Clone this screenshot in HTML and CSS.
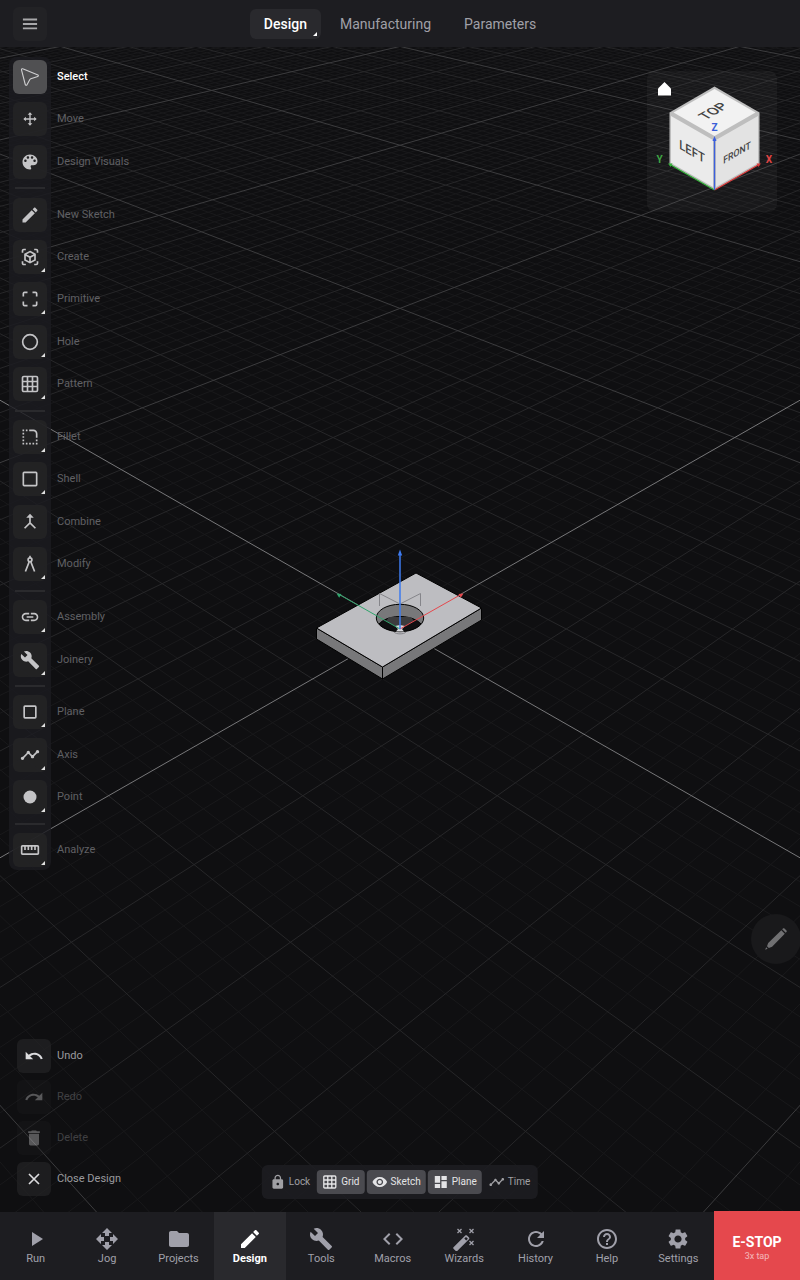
FILE: index.html
```html
<!DOCTYPE html>
<html lang="en">
<head>
    <meta charset="UTF-8">
    <meta name="viewport" content="width=device-width, initial-scale=1.0">
    <title>Design</title>
    <link rel="stylesheet" href="styles.css">
</head>
<body>
    <!-- icon set -->
    <svg class="icon-defs" aria-hidden="true">
        <symbol id="i-menu" viewBox="0 0 24 24"><path d="M3.5 5.5h17v2.3h-17zM3.500 10.800h17v2.300h-17zM3.500 16.100h17v2.300h-17z"/></symbol>
        <symbol id="i-select" viewBox="0 0 24 24"><path class="line thin" d="M3.3 2.2c-.9-.4-1.700.3-1.500 1.200l4.500 17.600c.3 1.100 1.600 1.300 2.100.3l3.400-6.200c.3-.5.7-.9 1.200-1.100l8.300-2.700c.9-.3 1-1.400.2-1.800z"/></symbol>
        <symbol id="i-move" viewBox="0 0 24 24"><path class="line" d="M12 4v16M4 12h16"/><path d="M12 2l3.500 3.800h-7zM12 22l3.500-3.800h-7zM2 12l3.800-3.500v7zM22 12l-3.800-3.500v7z"/></symbol>
        <symbol id="i-palette" viewBox="0 0 24 24"><path d="M12 3c-4.970 0-9 4.030-9 9s4.030 9 9 9c.83 0 1.500-.67 1.500-1.500 0-.39-.15-.74-.39-1.010-.23-.26-.38-.61-.38-.99 0-.83.67-1.500 1.500-1.500H16c2.760 0 5-2.240 5-5 0-4.420-4.030-8-9-8zm-5.500 9c-.83 0-1.500-.67-1.500-1.500S5.670 9 6.500 9 8 9.670 8 10.500 7.330 12 6.500 12zm3-4C8.670 8 8 7.330 8 6.500S8.670 5 9.500 5s1.500.67 1.500 1.500S10.330 8 9.500 8zm5 0c-.83 0-1.500-.67-1.500-1.500S13.670 5 14.500 5s1.500.67 1.500 1.500S15.330 8 14.500 8zm3 4c-.83 0-1.500-.67-1.500-1.500S16.670 9 17.500 9s1.500.67 1.500 1.500-.67 1.500-1.500 1.500z"/></symbol>
        <symbol id="i-edit" viewBox="0 0 24 24"><path d="M3 17.250V21h3.750L17.810 9.940l-3.750-3.750L3 17.250zM20.710 7.040c.39-.39.39-1.020 0-1.410l-2.340-2.340c-.39-.39-1.020-.39-1.410 0l-1.830 1.830 3.750 3.750 1.830-1.830z"/></symbol>
        <symbol id="i-create" viewBox="0 0 24 24"><path class="line" d="M3 7V4.500C3 3.700 3.700 3 4.500 3H7M17 3h2.500c.8 0 1.500.7 1.500 1.500V7M21 17v2.500c0 .8-.7 1.500-1.500 1.500H17M7 21H4.500c-.8 0-1.500-.7-1.500-1.500V17M12 5.500l6 3.300v6.700l-6 3.300-6-3.300V8.800zM6 9l6 3.300L18 9M12 12.300v6"/></symbol>
        <symbol id="i-primitive" viewBox="0 0 24 24"><path class="line" d="M4 9V5.500C4 4.700 4.700 4 5.500 4H9M15 4h3.500c.8 0 1.500.7 1.500 1.500V9M20 15v3.500c0 .8-.7 1.500-1.500 1.500H15M9 20H5.500c-.8 0-1.500-.7-1.500-1.500V15"/></symbol>
        <symbol id="i-hole" viewBox="0 0 24 24"><circle class="line" cx="12" cy="12" r="8.800"/></symbol>
        <symbol id="i-grid" viewBox="0 0 24 24"><path class="line" d="M4.500 3h15c.8 0 1.500.7 1.500 1.500v15c0 .8-.7 1.500-1.500 1.500h-15c-.8 0-1.500-.7-1.500-1.500v-15C3 3.700 3.700 3 4.500 3zM9 3v18M15 3v18M3 9h18M3 15h18"/></symbol>
        <symbol id="i-fillet" viewBox="0 0 24 24"><path d="M3 3h2v2H3zM3 7h2v2H3zM3 11h2v2H3zM3 15h2v2H3zM3 19h2v2H3zM7 19h2v2H7zM11 19h2v2h-2zM15 19h2v2h-2zM19 19h2v2h-2zM19 15h2v2h-2zM7 3h2v2H7zM11 3h5c2.800 0 5 2.200 5 5v5h-2V8c0-1.700-1.300-3-3-3h-5z"/></symbol>
        <symbol id="i-shell" viewBox="0 0 24 24"><rect class="line" x="4" y="4" width="16" height="16" rx="1"/></symbol>
        <symbol id="i-combine" viewBox="0 0 24 24"><path class="line" d="M12 5v8l-6.500 6.500M12 13l6.500 6.500"/><path d="M12 2l4.500 5h-9z"/></symbol>
        <symbol id="i-modify" viewBox="0 0 24 24"><circle class="line" cx="12" cy="7" r="2.300"/><path class="line" d="M12 2v2.500M11 9.500L6.500 21M13 9.500L17.500 21"/></symbol>
        <symbol id="i-link" viewBox="0 0 24 24"><path d="M3.900 12c0-1.710 1.390-3.100 3.100-3.100h4V7H7c-2.760 0-5 2.240-5 5s2.240 5 5 5h4v-1.900H7c-1.710 0-3.100-1.390-3.100-3.100zM8 13h8v-2H8v2zm9-6h-4v1.900h4c1.710 0 3.100 1.390 3.100 3.100s-1.390 3.100-3.100 3.100h-4V17h4c2.760 0 5-2.240 5-5s-2.240-5-5-5z"/></symbol>
        <symbol id="i-wrench" viewBox="0 0 24 24"><path d="M22.700 19l-9.100-9.100c.9-2.300.4-5-1.500-6.900-2-2-5-2.400-7.400-1.300L9 6 6 9 1.600 4.700C.4 7.100.9 10.100 2.900 12.100c1.900 1.900 4.600 2.400 6.900 1.500l9.100 9.100c.4.4 1 .4 1.400 0l2.300-2.300c.5-.4.5-1.100.1-1.400z"/></symbol>
        <symbol id="i-plane" viewBox="0 0 24 24"><rect class="line" x="5" y="5" width="14" height="14" rx="1"/></symbol>
        <symbol id="i-axis" viewBox="0 0 24 24"><path d="M23 8c0 1.100-.9 2-2 2-.18 0-.35-.02-.51-.07l-3.560 3.550c.05.16.07.34.07.52 0 1.100-.9 2-2 2s-2-.9-2-2c0-.18.02-.36.07-.52l-2.550-2.550c-.16.05-.34.07-.52.07s-.36-.02-.52-.07l-4.550 4.560c.05.16.07.33.07.51 0 1.100-.9 2-2 2s-2-.9-2-2 .9-2 2-2c.18 0 .35.02.51.07l4.560-4.550C8.020 9.360 8 9.180 8 9c0-1.100.9-2 2-2s2 .9 2 2c0 .18-.02.36-.07.52l2.550 2.550c.16-.05.34-.07.52-.07s.36.02.52.07l3.550-3.560C19.020 8.350 19 8.180 19 8c0-1.100.9-2 2-2s2 .9 2 2z"/></symbol>
        <symbol id="i-point" viewBox="0 0 24 24"><circle cx="12" cy="12" r="7.800"/></symbol>
        <symbol id="i-ruler" viewBox="0 0 24 24"><path d="M21 6H3c-1.100 0-2 .9-2 2v8c0 1.100.9 2 2 2h18c1.100 0 2-.9 2-2V8c0-1.100-.9-2-2-2zm0 10H3V8h2v4h2V8h2v4h2V8h2v4h2V8h2v4h2V8h2v8z"/></symbol>
        <symbol id="i-undo" viewBox="0 0 24 24"><path d="M12.500 8c-2.650 0-5.050.99-6.900 2.600L2 7v9h9l-3.620-3.620c1.390-1.160 3.160-1.880 5.120-1.880 3.540 0 6.550 2.310 7.600 5.500l2.370-.78C21.080 11.030 17.150 8 12.500 8z"/></symbol>
        <symbol id="i-redo" viewBox="0 0 24 24"><path d="M18.400 10.600C16.550 8.990 14.150 8 11.500 8c-4.650 0-8.580 3.030-9.960 7.220L3.900 16c1.050-3.190 4.050-5.500 7.600-5.500 1.950 0 3.730.72 5.120 1.880L13 16h9V7l-3.600 3.600z"/></symbol>
        <symbol id="i-delete" viewBox="0 0 24 24"><path d="M6 19c0 1.100.9 2 2 2h8c1.100 0 2-.9 2-2V7H6v12zM19 4h-3.500l-1-1h-5l-1 1H5v2h14V4z"/></symbol>
        <symbol id="i-close" viewBox="0 0 24 24"><path class="line" d="M6 6l12 12M18 6L6 18"/></symbol>
        <symbol id="i-lock" viewBox="0 0 24 24"><path d="M18 8h-1V6c0-2.760-2.240-5-5-5S7 3.240 7 6v2H6c-1.100 0-2 .9-2 2v10c0 1.100.9 2 2 2h12c1.100 0 2-.9 2-2V10c0-1.100-.9-2-2-2zm-6 9c-1.100 0-2-.9-2-2s.9-2 2-2 2 .9 2 2-.9 2-2 2zm3.100-9H8.900V6c0-1.710 1.390-3.100 3.100-3.100 1.710 0 3.100 1.390 3.100 3.100v2z"/></symbol>
        <symbol id="i-eye" viewBox="0 0 24 24"><path d="M12 4.500C7 4.500 2.730 7.610 1 12c1.730 4.390 6 7.500 11 7.500s9.270-3.110 11-7.500c-1.730-4.390-6-7.500-11-7.500zM12 17c-2.760 0-5-2.240-5-5s2.240-5 5-5 5 2.240 5 5-2.240 5-5 5zm0-8c-1.660 0-3 1.340-3 3s1.340 3 3 3 3-1.340 3-3-1.340-3-3-3z"/></symbol>
        <symbol id="i-dash" viewBox="0 0 24 24"><path d="M3 13h8V3H3v10zm0 8h8v-6H3v6zm10 0h8V11h-8v10zm0-18v6h8V3h-8z"/></symbol>
        <symbol id="i-play" viewBox="0 0 24 24"><path d="M8 5v14l11-7z"/></symbol>
        <symbol id="i-jog" viewBox="0 0 24 24"><path d="M10 9h4V6h3l-5-5-5 5h3v3zm-1 1H6V7l-5 5 5 5v-3h3v-4zm14 2l-5-5v3h-3v4h3v3l5-5zm-9 3h-4v3H7l5 5 5-5h-3v-3z"/></symbol>
        <symbol id="i-folder" viewBox="0 0 24 24"><path d="M10 4H4c-1.100 0-1.990.9-1.990 2L2 18c0 1.100.9 2 2 2h16c1.100 0 2-.9 2-2V8c0-1.100-.9-2-2-2h-8l-2-2z"/></symbol>
        <symbol id="i-code" viewBox="0 0 24 24"><path d="M9.400 16.600L4.800 12l4.600-4.600L8 6l-6 6 6 6 1.400-1.400zm5.200 0l4.600-4.600-4.600-4.600L16 6l6 6-6 6-1.400-1.400z"/></symbol>
        <symbol id="i-wand" viewBox="0 0 24 24"><path fill-rule="evenodd" d="M1.500 20.300L13.300 8.500c.5-.5 1.200-.5 1.700 0l2 2c.5.5.5 1.200 0 1.700L5.200 24c-.4.4-1 .4-1.400 0l-2.300-2.300c-.4-.4-.4-1 0-1.400zM12.300 11.600l1.900 1.900 1.700-1.700-1.900-1.900z"/><path class="line thin" d="M5.500 2l4 4M9.500 2l-4 4M17.500 2l4 4M21.500 2l-4 4M17.500 14l4 4M21.500 14l-4 4"/></symbol>
        <symbol id="i-history" viewBox="0 0 24 24"><path d="M17.650 6.350C16.200 4.900 14.210 4 12 4c-4.420 0-7.990 3.580-7.990 8s3.570 8 7.990 8c3.730 0 6.840-2.550 7.730-6h-2.080c-.82 2.330-3.040 4-5.650 4-3.310 0-6-2.690-6-6s2.690-6 6-6c1.660 0 3.140.69 4.220 1.780L13 11h7V4l-2.350 2.350z"/></symbol>
        <symbol id="i-help" viewBox="0 0 24 24"><path d="M11 18h2v-2h-2v2zm1-16C6.480 2 2 6.480 2 12s4.480 10 10 10 10-4.480 10-10S17.520 2 12 2zm0 18c-4.410 0-8-3.590-8-8s3.590-8 8-8 8 3.590 8 8-3.590 8-8 8zm0-14c-2.210 0-4 1.790-4 4h2c0-1.100.9-2 2-2s2 .9 2 2c0 2-3 1.750-3 5h2c0-2.250 3-2.500 3-5 0-2.210-1.790-4-4-4z"/></symbol>
        <symbol id="i-settings" viewBox="0 0 24 24"><path d="M19.140 12.940c.04-.3.06-.61.06-.94 0-.32-.02-.64-.07-.94l2.030-1.580c.18-.14.23-.41.12-.61l-1.920-3.320c-.12-.22-.37-.29-.59-.22l-2.390.96c-.5-.38-1.030-.7-1.620-.94l-.36-2.540c-.04-.24-.24-.41-.48-.41h-3.840c-.24 0-.43.17-.47.41l-.36 2.540c-.59.24-1.130.57-1.620.94l-2.390-.96c-.22-.08-.47 0-.59.22L2.740 8.870c-.12.21-.08.47.12.61l2.030 1.580c-.05.3-.09.63-.09.94s.02.64.07.94l-2.030 1.580c-.18.14-.23.41-.12.61l1.920 3.320c.12.22.37.29.59.22l2.390-.96c.5.38 1.030.7 1.620.94l.36 2.540c.05.24.24.41.48.41h3.840c.24 0 .44-.17.47-.41l.36-2.540c.59-.24 1.130-.56 1.620-.94l2.390.96c.22.08.47 0 .59-.22l1.920-3.320c.12-.22.07-.47-.12-.61l-2.010-1.580zM12 15.600c-1.980 0-3.600-1.620-3.600-3.600s1.620-3.600 3.600-3.600 3.600 1.620 3.600 3.600-1.620 3.600-3.600 3.600z"/></symbol>
        <symbol id="i-stylus" viewBox="0 0 24 24"><path d="M2 22l.9-2.300 1.400 1.400zM3.700 18.600l1.100-3L16.900 3.900l3.200 3.200L8.400 19.200l-3 1.100zM17.700 3.100l.7-.8c.4-.4 1-.4 1.400 0l1.900 1.900c.4.4.4 1 0 1.400l-.8.7z"/></symbol>
    </svg>

    <header class="top-bar">
        <button class="icon-box menu-btn" aria-label="Menu"><svg class="icon"><use href="#i-menu"/></svg></button>
        <nav class="tabs">
            <button class="tab active more">Design</button>
            <button class="tab">Manufacturing</button>
            <button class="tab">Parameters</button>
        </nav>
    </header>

    <main class="stage">
        <svg class="scene" viewBox="-400 -582 800 1165" preserveAspectRatio="xMidYMid slice" aria-hidden="true">
            <g id="grid"></g>

            <!-- plate with a through hole -->
            <g class="plate">
                <path class="side" d="M-83.500-1L-17.500 38V50L-83.500 10z"/>
                <path class="side" d="M-17.500 38L81.500-21V-9L-17.500 50z"/>
                <path class="face" d="M16-56L81.500-21L-17.500 38L-83.500-1z"/>
                <clipPath id="bore"><ellipse cx="0" cy="-11" rx="23.700" ry="13.700"/></clipPath>
                <ellipse class="wall" cx="0" cy="-11" rx="23.700" ry="13.700"/>
                <g clip-path="url(#bore)">
                    <ellipse class="through" cx="0" cy="1" rx="23.500" ry="13.500"/>
                    <path class="ghost" d="M-14-8L0 0L14-8L11-12H-11z"/>
                </g>
                <ellipse class="rim" cx="0" cy="-11" rx="23.700" ry="13.700"/>
            </g>
            <path class="sketch" d="M-20.500-23V-35.500L0-25L20.500-35.500V-23M-6 3c2 2.500 10 2.500 12 0"/>
            <path class="origin" d="M-5-3L0-4L5-3L2 0L4 2.500H-4L-2 0z"/>
            <g class="axis-y"><path d="M0 0L-60-34"/><path class="tip" d="M-63.500-35.500l5 .5-2.300 3.800z"/></g>
            <g class="axis-x"><path d="M0 0L60-34"/><path class="tip" d="M63.500-35.500l-5 .5 2.300 3.800z"/></g>
            <g class="axis-z"><path d="M0 0V-75"/><path class="tip" d="M0-79.500l2.200 6h-4.400z"/></g>
        </svg>

        <section class="side-panel">
            <ul class="tools">
                <li><button class="tool active"><span class="icon-box"><svg class="icon"><use href="#i-select"/></svg></span>Select</button></li>
                <li><button class="tool"><span class="icon-box"><svg class="icon small"><use href="#i-move"/></svg></span>Move</button></li>
                <li><button class="tool"><span class="icon-box"><svg class="icon"><use href="#i-palette"/></svg></span>Design Visuals</button></li>
                <li class="sep"></li>
                <li><button class="tool"><span class="icon-box"><svg class="icon"><use href="#i-edit"/></svg></span>New Sketch</button></li>
                <li><button class="tool"><span class="icon-box more"><svg class="icon"><use href="#i-create"/></svg></span>Create</button></li>
                <li><button class="tool"><span class="icon-box more"><svg class="icon"><use href="#i-primitive"/></svg></span>Primitive</button></li>
                <li><button class="tool"><span class="icon-box more"><svg class="icon"><use href="#i-hole"/></svg></span>Hole</button></li>
                <li><button class="tool"><span class="icon-box more"><svg class="icon"><use href="#i-grid"/></svg></span>Pattern</button></li>
                <li class="sep"></li>
                <li><button class="tool"><span class="icon-box more"><svg class="icon"><use href="#i-fillet"/></svg></span>Fillet</button></li>
                <li><button class="tool"><span class="icon-box more"><svg class="icon"><use href="#i-shell"/></svg></span>Shell</button></li>
                <li><button class="tool"><span class="icon-box"><svg class="icon"><use href="#i-combine"/></svg></span>Combine</button></li>
                <li><button class="tool"><span class="icon-box more"><svg class="icon"><use href="#i-modify"/></svg></span>Modify</button></li>
                <li class="sep"></li>
                <li><button class="tool"><span class="icon-box more"><svg class="icon"><use href="#i-link"/></svg></span>Assembly</button></li>
                <li><button class="tool"><span class="icon-box more"><svg class="icon"><use href="#i-wrench"/></svg></span>Joinery</button></li>
                <li class="sep"></li>
                <li><button class="tool"><span class="icon-box more"><svg class="icon"><use href="#i-plane"/></svg></span>Plane</button></li>
                <li><button class="tool"><span class="icon-box more"><svg class="icon"><use href="#i-axis"/></svg></span>Axis</button></li>
                <li><button class="tool"><span class="icon-box more"><svg class="icon"><use href="#i-point"/></svg></span>Point</button></li>
                <li class="sep"></li>
                <li><button class="tool"><span class="icon-box more"><svg class="icon"><use href="#i-ruler"/></svg></span>Analyze</button></li>
            </ul>

            <div class="actions">
                <button class="tool"><span class="icon-box"><svg class="icon"><use href="#i-undo"/></svg></span>Undo</button>
                <button class="tool" disabled><span class="icon-box"><svg class="icon"><use href="#i-redo"/></svg></span>Redo</button>
                <button class="tool" disabled><span class="icon-box"><svg class="icon"><use href="#i-delete"/></svg></span>Delete</button>
                <button class="tool"><span class="icon-box"><svg class="icon"><use href="#i-close"/></svg></span>Close Design</button>
            </div>
        </section>

        <div class="view-cube">
            <svg viewBox="0 0 130 141" aria-label="View cube">
                <path class="home" d="M17.500 11L24 17.500V24.500H11V17.500z"/>
                <path class="edge" d="M67.500 15.500L112.500 41.500V93L67.500 119L22.500 93V41.500z"/>
                <path class="top" d="M67.500 18L108.500 41.500L67.500 65L26.500 41.500z"/>
                <path class="left" d="M24 45L66 69V116L24 92z"/>
                <path class="front" d="M111 45L69 69V116L111 92z"/>
                <text class="cube-text" font-size="14" transform="matrix(.87 -.5 .87 .5 66 40)" y="5">TOP</text>
                <text class="cube-text" font-size="13" transform="matrix(.87 .5 0 1 45 80)" y="5">LEFT</text>
                <text class="cube-text" font-size="10" transform="matrix(.87 -.5 0 1 90 81)" y="4">FRONT</text>
                <path class="cube-y" d="M67.500 119L23 93.500"/><path class="cube-y tip" d="M21 92.500l4.500 0-2 3.500z"/>
                <path class="cube-x" d="M67.500 119L112 93.500"/><path class="cube-x tip" d="M114 92.500l-4.500 0 2 3.500z"/>
                <path class="cube-z" d="M67.500 119V68"/><path class="cube-z tip" d="M67.500 65l2 5h-4z"/>
                <text class="axis-name z" x="67.500" y="60">Z</text>
                <text class="axis-name y" x="12.500" y="92">Y</text>
                <text class="axis-name x" x="122" y="92">X</text>
            </svg>
        </div>

        <button class="stylus" aria-label="Stylus"><svg class="icon"><use href="#i-stylus"/></svg></button>

        <div class="toggles">
            <button class="toggle"><svg class="icon"><use href="#i-lock"/></svg>Lock</button>
            <button class="toggle on"><svg class="icon"><use href="#i-grid"/></svg>Grid</button>
            <button class="toggle on"><svg class="icon"><use href="#i-eye"/></svg>Sketch</button>
            <button class="toggle on"><svg class="icon"><use href="#i-dash"/></svg>Plane</button>
            <button class="toggle"><svg class="icon"><use href="#i-axis"/></svg>Time</button>
        </div>
    </main>

    <footer class="bottom-bar">
        <nav class="main-nav">
            <a href="#run"><svg class="icon"><use href="#i-play"/></svg>Run</a>
            <a href="#jog"><svg class="icon"><use href="#i-jog"/></svg>Jog</a>
            <a href="#projects"><svg class="icon"><use href="#i-folder"/></svg>Projects</a>
            <a href="#design" class="active"><svg class="icon"><use href="#i-edit"/></svg>Design</a>
            <a href="#tools"><svg class="icon"><use href="#i-wrench"/></svg>Tools</a>
            <a href="#macros"><svg class="icon"><use href="#i-code"/></svg>Macros</a>
            <a href="#wizards"><svg class="icon"><use href="#i-wand"/></svg>Wizards</a>
            <a href="#history"><svg class="icon"><use href="#i-history"/></svg>History</a>
            <a href="#help"><svg class="icon"><use href="#i-help"/></svg>Help</a>
            <a href="#settings"><svg class="icon"><use href="#i-settings"/></svg>Settings</a>
        </nav>
        <button class="e-stop">E-STOP<small>3x tap</small></button>
    </footer>

    <script>
        // ground grid in perspective, origin at 0,0 of the scene
        const SCALE_X = 166.2, SCALE_Y = 95.06, DEPTH = 0.0965;
        const MIN = -7, MAX = 24, SUB = 5;

        function project(a, b) {
            const u = (a - b) / 2;
            const v = (a + b) / 2;
            const w = 1 + DEPTH * v;
            return (SCALE_X * u / w).toFixed(2) + ' ' + (-SCALE_Y * v / w).toFixed(2);
        }

        const paths = { minor: '', medium: '', major: '', axis: '' };
        for (let i = MIN * SUB; i <= MAX * SUB; i++) {
            const t = i / SUB;
            let level = 'minor';
            if (i === 0) level = 'axis';
            else if (i % (SUB * 5) === 0) level = 'major';
            else if (i % SUB === 0) level = 'medium';
            paths[level] += 'M' + project(t, MIN) + 'L' + project(t, MAX);
            paths[level] += 'M' + project(MIN, t) + 'L' + project(MAX, t);
        }

        const grid = document.getElementById('grid');
        for (const level in paths) {
            const path = document.createElementNS('http://www.w3.org/2000/svg', 'path');
            path.setAttribute('class', 'grid-' + level);
            path.setAttribute('d', paths[level]);
            grid.appendChild(path);
        }
    </script>
</body>
</html>
```
FILE: styles.css
```css
* {
    box-sizing: border-box;
}

body {
    margin: 0;
    min-height: 100vh;
    display: flex;
    flex-direction: column;
    font-family: Roboto, "Liberation Sans", sans-serif;
    font-size: 11px;
    line-height: 14px;
    color: #a0a0a8;
    background-color: #0f0f11;
}

button {
    font: inherit;
    color: inherit;
    background: none;
    border: 0;
    padding: 0;
    cursor: pointer;
}

.icon-defs {
    position: absolute;
    width: 0;
    height: 0;
}

.icon {
    display: block;
    flex: none;
    width: 20px;
    height: 20px;
    fill: currentColor;
}

.icon.small {
    width: 16px;
    height: 16px;
}

.line {
    fill: none;
    stroke: currentColor;
    stroke-width: 2;
}

.line.thin {
    stroke-width: 1.3;
}

.icon-box {
    position: relative;
    flex: none;
    display: flex;
    align-items: center;
    justify-content: center;
    width: 34px;
    height: 34px;
    border-radius: 6px;
    background-color: rgba(36, 36, 37, 0.8);
    color: #c4c4c6;
}

/* corner mark on buttons that open a submenu */
.more {
    position: relative;
}

.more::after {
    content: "";
    position: absolute;
    right: 2px;
    bottom: 2px;
    border-left: 4px solid transparent;
    border-bottom: 4px solid #e0e0e0;
}

/* top bar */
.top-bar {
    display: grid;
    grid-template-columns: 1fr auto 1fr;
    align-items: center;
    height: 47px;
    padding: 0 13px;
    background-color: #1d1d21;
}

.menu-btn {
    background-color: #222225;
    color: #a8a8aa;
}

.tabs {
    display: flex;
    gap: 5px;
}

.tab {
    height: 30px;
    padding: 0 14px;
    border-radius: 6px;
    font-size: 14px;
    color: #a0a0a8;
}

.tab.active {
    background-color: #29292d;
    color: #fff;
    font-weight: 500;
}

.tab.more::after {
    right: 4px;
    bottom: 3px;
    border-bottom-color: #fff;
}

/* 3d view */
.stage {
    position: relative;
    flex: 1;
    display: flex;
    overflow: hidden;
}

.scene {
    position: absolute;
    width: 100%;
    height: 100%;
}

.grid-minor,
.grid-medium,
.grid-major,
.grid-axis {
    fill: none;
    stroke-width: 1;
}

.grid-minor {
    stroke: #19191b;
}

.grid-medium {
    stroke: #272729;
}

.grid-major {
    stroke: #3c3c3e;
}

.grid-axis {
    stroke: #777779;
}

.plate path,
.plate .rim {
    stroke: #000;
    stroke-width: 1;
    stroke-linejoin: round;
}

.plate .side,
.plate .wall {
    fill: #78787a;
}

.plate .face {
    fill: #bdbdc1;
}

.plate .through {
    fill: #101012;
    stroke: #000;
}

.plate .ghost {
    fill: #3c3c3e;
    stroke: none;
}

.plate .rim {
    fill: none;
}

.sketch {
    fill: none;
    stroke: #85858a;
}

.origin {
    fill: #d8d8dc;
}

.axis-x {
    stroke: #e5484d;
    fill: #e5484d;
}

.axis-y {
    stroke: #30a46c;
    fill: #30a46c;
}

.axis-z {
    stroke: #3e7bee;
    fill: #3e7bee;
    stroke-width: 1.5;
}

/* left tools */
.side-panel {
    position: relative;
    display: flex;
    flex-direction: column;
    padding: 10px 9px 16px;
}

.tools {
    position: relative;
    flex: 1;
    display: flex;
    flex-direction: column;
    justify-content: space-between;
    margin: 0;
    padding: 3px 4px;
    list-style: none;
}

.tools::before {
    content: "";
    position: absolute;
    top: 0;
    bottom: 0;
    left: 0;
    width: 42px;
    border-radius: 8px;
    background-color: rgba(28, 28, 32, 0.8);
}

.tools li {
    position: relative;
}

.tools .sep {
    width: 30px;
    height: 2px;
    margin-left: 2px;
    background-color: #2a2a2d;
}

.tool {
    display: flex;
    align-items: center;
    gap: 10px;
    color: #606064;
}

.tool.active {
    color: #fff;
    font-weight: 500;
}

.tool.active .icon-box {
    background-color: #505052;
    color: #d0d0d2;
}

.actions {
    display: flex;
    flex-direction: column;
    gap: 7px;
    margin-top: 169px;
    padding-left: 8px;
}

.actions .tool {
    gap: 6px;
    color: #9a9a9e;
}

.actions .icon-box {
    background-color: rgba(36, 36, 37, 0.7);
    color: #dcdcde;
}

.actions .tool:disabled {
    opacity: 0.35;
}

/* view cube */
.view-cube {
    position: absolute;
    top: 24px;
    right: 23px;
    width: 130px;
    border-radius: 8px;
    background-color: rgba(255, 255, 255, 0.04);
}

.view-cube svg {
    display: block;
}

.home {
    fill: #fff;
}

.edge {
    fill: #bebebe;
}

.top {
    fill: #f2f2f2;
}

.left {
    fill: #ebebeb;
}

.front {
    fill: #e3e3e3;
}

.cube-text {
    fill: #444;
    font-weight: 500;
    text-anchor: middle;
}

.cube-x,
.cube-y,
.cube-z {
    fill: none;
    stroke-width: 1.3;
}

.cube-x {
    stroke: #d93a3a;
}

.cube-y {
    stroke: #35b03a;
}

.cube-z {
    stroke: #3a5fe0;
}

.cube-x.tip {
    fill: #d93a3a;
}

.cube-y.tip {
    fill: #35b03a;
}

.cube-z.tip {
    fill: #3a5fe0;
}

.tip {
    stroke: none;
}

.axis-name {
    font-size: 10px;
    font-weight: 700;
    text-anchor: middle;
}

.axis-name.x {
    fill: #e04545;
}

.axis-name.y {
    fill: #40a845;
}

.axis-name.z {
    fill: #3a5fd8;
}

.stylus {
    position: absolute;
    right: -1px;
    bottom: 248px;
    display: flex;
    align-items: center;
    justify-content: center;
    width: 50px;
    height: 50px;
    border-radius: 50%;
    background-color: #19191b;
    color: #707072;
}

.stylus .icon {
    width: 26px;
    height: 26px;
}

/* display toggles */
.toggles {
    position: absolute;
    bottom: 13px;
    left: 50%;
    transform: translateX(-50%);
    display: flex;
    gap: 2px;
    padding: 5px 3px;
    border-radius: 6px;
    background-color: rgba(29, 29, 33, 0.9);
}

.toggle {
    display: flex;
    align-items: center;
    gap: 3px;
    height: 24px;
    padding: 0 5px;
    border-radius: 4px;
    font-size: 10px;
    color: #a0a0a4;
}

.toggle.on {
    background-color: #4a4a4f;
    color: #e4e4e6;
}

.toggle .icon {
    width: 16px;
    height: 16px;
}

/* bottom bar */
.bottom-bar {
    display: flex;
    height: 68px;
    background-color: #1d1d21;
}

.main-nav {
    flex: 1;
    display: flex;
}

.main-nav a {
    flex: 1;
    display: flex;
    flex-direction: column;
    align-items: center;
    gap: 1px;
    padding-top: 15px;
    color: #a0a0aa;
    text-decoration: none;
}

.main-nav .icon {
    width: 24px;
    height: 24px;
}

.main-nav .active {
    background-color: #29292d;
    color: #fff;
    font-weight: 700;
}

.e-stop {
    width: 86px;
    margin-top: -1px;
    padding-top: 6px;
    background-color: #e5484d;
    color: #fff;
    font-size: 14px;
    font-weight: 700;
    z-index: 1;
}

.e-stop small {
    display: block;
    font-size: 9px;
    font-weight: 400;
    opacity: 0.6;
}
```
